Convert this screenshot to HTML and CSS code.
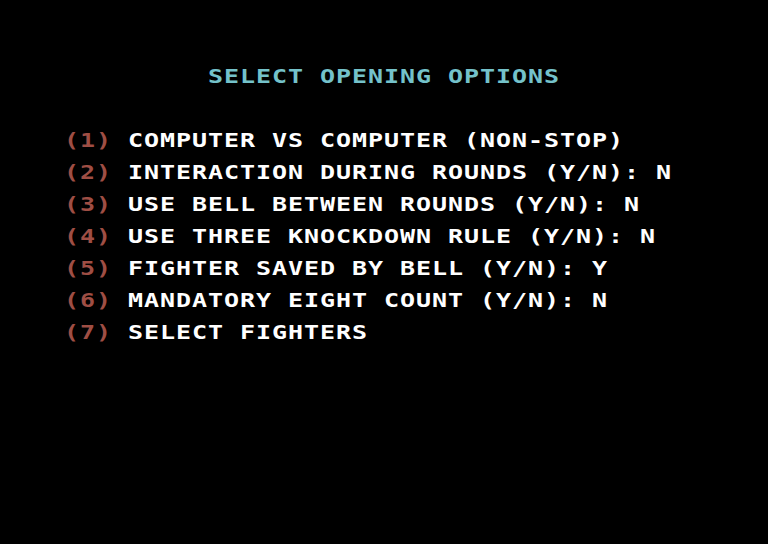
FILE: index.html
```html
<!DOCTYPE html>
<html lang="en">
<head>
    <meta charset="UTF-8">
    <title>Select Opening Options</title>
    <link rel="stylesheet" href="styles.css">
</head>
<body>

    <div class="screen">
        <div class="row title">SELECT OPENING OPTIONS</div>

        <div class="menu">
            <div class="row"><span class="key">(1)</span> COMPUTER VS COMPUTER (NON-STOP)</div>
            <div class="row"><span class="key">(2)</span> INTERACTION DURING ROUNDS (Y/N): N</div>
            <div class="row"><span class="key">(3)</span> USE BELL BETWEEN ROUNDS (Y/N): N</div>
            <div class="row"><span class="key">(4)</span> USE THREE KNOCKDOWN RULE (Y/N): N</div>
            <div class="row"><span class="key">(5)</span> FIGHTER SAVED BY BELL (Y/N): Y</div>
            <div class="row"><span class="key">(6)</span> MANDATORY EIGHT COUNT (Y/N): N</div>
            <div class="row"><span class="key">(7)</span> SELECT FIGHTERS</div>
        </div>
    </div>

</body>
</html>
```

FILE: styles.css
```css
body {
    margin: 0;
    padding: 0;
    background-color: #000;
    width: 768px;
    height: 544px;
    overflow: hidden;
}

/* 40x25 text screen, each cell 16x16 */
.screen {
    width: 640px;
    padding: 68px 0 0 64px;
    font-family: "DejaVu Sans Mono", "Liberation Mono", monospace;
    font-weight: bold;
    font-size: 20px;
    color: #fff;
}

/* glyphs are widened, so the box is narrowed by the same factor */
.row {
    width: 512px;
    height: 16px;
    line-height: 16px;
    white-space: pre;
    letter-spacing: 0.76px;
    transform: scaleX(1.25);
    transform-origin: 0 0;
}

.title {
    color: #74c2ca;
    padding-left: 115.2px;
    width: 396.8px;
}

.menu {
    margin-top: 48px;
    display: flex;
    flex-direction: column;
    gap: 16px;
}

.key {
    color: #9f4e44;
}
```
